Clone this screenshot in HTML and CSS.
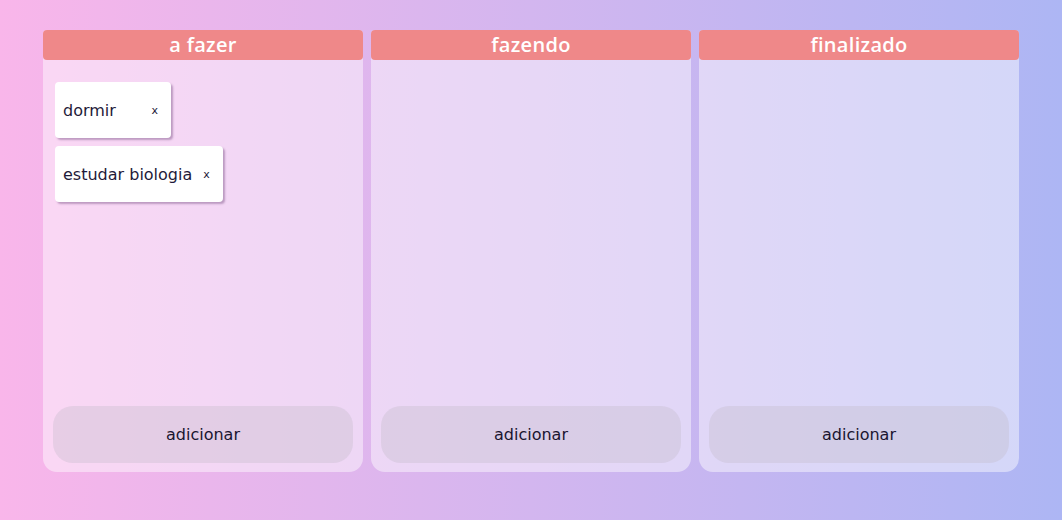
FILE: index.html
```html
<!DOCTYPE html>
<html lang="pt">
<head>
<meta charset="utf-8">
<title>kanban</title>
<link rel="stylesheet" href="styles.css">
</head>
<body>
<main class="board">
  <section class="column">
    <h2 class="column-title">a fazer</h2>
    <div class="cards">
      <div class="card"><span class="card-text">dormir</span><button class="card-remove">x</button></div>
      <div class="card"><span class="card-text">estudar biologia</span><button class="card-remove">x</button></div>
    </div>
    <button class="add-btn">adicionar</button>
  </section>
  <section class="column">
    <h2 class="column-title">fazendo</h2>
    <div class="cards"></div>
    <button class="add-btn">adicionar</button>
  </section>
  <section class="column">
    <h2 class="column-title">finalizado</h2>
    <div class="cards"></div>
    <button class="add-btn">adicionar</button>
  </section>
</main>
</body>
</html>
```
FILE: styles.css
```css
* { box-sizing: border-box; }
html, body { height: 100%; }
body {
  margin: 0;
  font-family: "DejaVu Sans", "Noto Sans", sans-serif;
  background: linear-gradient(90deg, #f9b6ea 0%, #adb6f4 100%);
}
.board {
  display: flex;
  justify-content: center;
  gap: 8px;
  padding-top: 30px;
}
.column {
  width: 320px;
  height: 442px;
  background: rgba(255, 255, 255, 0.46);
  border-radius: 4px 4px 14px 14px;
  display: flex;
  flex-direction: column;
}
.column-title {
  margin: 0;
  height: 30px;
  line-height: 30px;
  background: #ef8889;
  border-radius: 4px;
  color: #fff;
  text-align: center;
  font-family: "Open Sans", "DejaVu Sans", sans-serif;
  font-size: 20px;
  font-weight: 600;
  letter-spacing: 0.3px;
}
.cards {
  flex: 1;
  padding: 22px 12px 0;
  display: flex;
  flex-direction: column;
  align-items: flex-start;
  gap: 8px;
}
.card {
  display: flex;
  align-items: center;
  justify-content: space-between;
  gap: 11px;
  min-width: 116px;
  height: 56px;
  padding: 0 13px 0 8px;
  background: #fff;
  border-radius: 4px;
  box-shadow: 2px 2px 2px rgba(120, 80, 130, 0.45);
  color: #1f1b3a;
  font-size: 16px;
}
.card-remove {
  border: 0;
  background: none;
  padding: 0;
  font: inherit;
  font-size: 11px;
  color: #1f1b3a;
  cursor: pointer;
}
.add-btn {
  margin: 0 10px 9px;
  height: 57px;
  border: 0;
  border-radius: 20px;
  background: rgba(195, 185, 200, 0.35);
  font: inherit;
  font-size: 16px;
  color: #1a1530;
  cursor: pointer;
}
```
